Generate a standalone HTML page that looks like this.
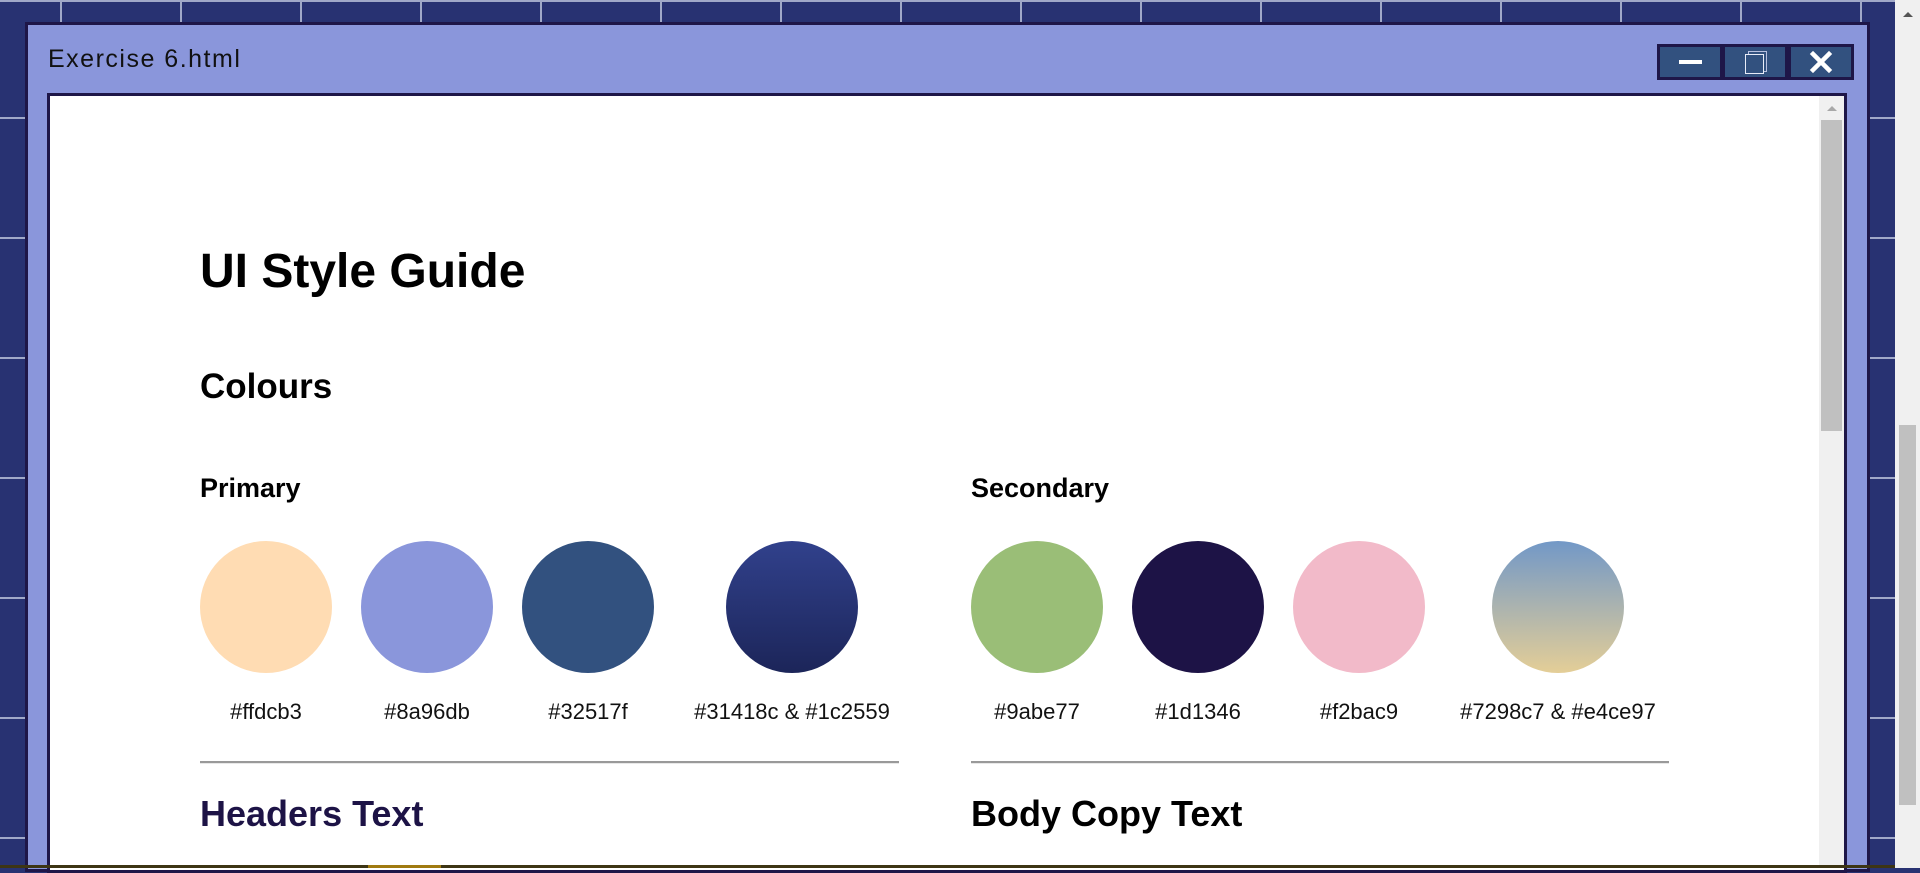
<!DOCTYPE html>
<html><head><meta charset="utf-8"><style>
*{margin:0;padding:0;box-sizing:border-box}
body{width:1920px;height:868px;overflow:hidden;position:relative;background:#283272;font-family:"Liberation Sans",sans-serif}
.vl{position:absolute;top:0;width:2px;height:868px;background:#a0a8c8}
.hl{position:absolute;left:0;height:2px;width:1895px;background:#a0a8c8}
.abs{position:absolute}
.c{position:absolute;width:132px;height:132px;border-radius:50%;top:541px}
.lb{position:absolute;top:699px;font-size:22px;color:#111;text-align:center;width:260px}
.hr{position:absolute;top:761px;height:3px;border-top:2px solid #999;border-bottom:1px solid #e8e8e8}
</style></head><body>
<div class="hl" style="top:0"></div>
<div class="vl" style="left:60px"></div><div class="vl" style="left:180px"></div><div class="vl" style="left:300px"></div><div class="vl" style="left:420px"></div><div class="vl" style="left:540px"></div><div class="vl" style="left:660px"></div><div class="vl" style="left:780px"></div><div class="vl" style="left:900px"></div><div class="vl" style="left:1020px"></div><div class="vl" style="left:1140px"></div><div class="vl" style="left:1260px"></div><div class="vl" style="left:1380px"></div><div class="vl" style="left:1500px"></div><div class="vl" style="left:1620px"></div><div class="vl" style="left:1740px"></div><div class="vl" style="left:1860px"></div>
<div class="hl" style="top:117px"></div><div class="hl" style="top:237px"></div><div class="hl" style="top:357px"></div><div class="hl" style="top:477px"></div><div class="hl" style="top:597px"></div><div class="hl" style="top:717px"></div><div class="hl" style="top:837px"></div>
<div class="abs" style="left:1895px;top:0;width:25px;height:868px;background:#f0f0f0"></div>
<div class="abs" style="left:1903px;top:12px;width:0;height:0;border-left:5px solid transparent;border-right:5px solid transparent;border-bottom:5px solid #555"></div>
<div class="abs" style="left:1899px;top:425px;width:17px;height:380px;background:#c0c0c0"></div>
<div class="abs" style="left:25px;top:22px;width:1845px;height:850px;background:#8a96db;border:3px solid #1e1648"></div>
<div class="abs" style="left:48px;top:45px;font-size:25px;color:#111;letter-spacing:1.5px">Exercise 6.html</div>
<div class="abs" style="left:1657px;top:44px;width:197px;height:36px;background:#1e1648"></div>
<div class="abs" style="left:1660px;top:47px;width:60px;height:30px;background:#32517f"></div>
<div class="abs" style="left:1725px;top:47px;width:60px;height:30px;background:#32517f"></div>
<div class="abs" style="left:1791px;top:47px;width:60px;height:30px;background:#32517f"></div>
<div class="abs" style="left:1679px;top:60px;width:23px;height:4px;background:#fff"></div>
<div class="abs" style="left:1748px;top:51px;width:19px;height:21px;border:1px solid #b8c0e0"></div>
<div class="abs" style="left:1745px;top:54px;width:19px;height:20px;border:1.5px solid #e8ecf8;background:#32517f"></div>
<svg class="abs" style="left:1808px;top:49px" width="26" height="26" viewBox="0 0 26 26"><path d="M5 5L21 21M21 5L5 21" stroke="#fff" stroke-width="4.5" stroke-linecap="square"/></svg>
<div class="abs" style="left:47px;top:93px;width:1800px;height:780px;background:#fff;border:3px solid #1e1648"></div>
<div class="abs" style="left:1819px;top:96px;width:25px;height:772px;background:#f0f0f0"></div>
<div class="abs" style="left:1827px;top:106px;width:0;height:0;border-left:5px solid transparent;border-right:5px solid transparent;border-bottom:5px solid #a8a8a8"></div>
<div class="abs" style="left:1821px;top:120px;width:21px;height:311px;background:#c0c0c0"></div>
<div class="abs" style="left:0;top:865px;width:1895px;height:3px;background:#3d3514"></div>
<div class="abs" style="left:368px;top:865px;width:73px;height:3px;background:#a07a10"></div>
<div class="abs" style="left:200px;top:244px;font-size:48px;font-weight:bold;color:#000">UI Style Guide</div>
<div class="abs" style="left:200px;top:367px;font-size:35px;font-weight:bold;color:#000">Colours</div>
<div class="abs" style="left:200px;top:473px;font-size:27px;font-weight:bold;color:#000">Primary</div>
<div class="abs" style="left:971px;top:473px;font-size:27px;font-weight:bold;color:#000">Secondary</div>
<div class="c" style="left:200px;background:#ffdcb3"></div>
<div class="c" style="left:361px;background:#8a96db"></div>
<div class="c" style="left:522px;background:#32517f"></div>
<div class="c" style="left:726px;background:linear-gradient(#31418c,#1c2559)"></div>
<div class="c" style="left:971px;background:#9abe77"></div>
<div class="c" style="left:1132px;background:#1d1346"></div>
<div class="c" style="left:1293px;background:#f2bac9"></div>
<div class="c" style="left:1492px;background:linear-gradient(#7298c7,#e4ce97)"></div>
<div class="lb" style="left:136px">#ffdcb3</div>
<div class="lb" style="left:297px">#8a96db</div>
<div class="lb" style="left:458px">#32517f</div>
<div class="lb" style="left:662px">#31418c &amp; #1c2559</div>
<div class="lb" style="left:907px">#9abe77</div>
<div class="lb" style="left:1068px">#1d1346</div>
<div class="lb" style="left:1229px">#f2bac9</div>
<div class="lb" style="left:1428px">#7298c7 &amp; #e4ce97</div>
<div class="hr" style="left:200px;width:699px"></div>
<div class="hr" style="left:971px;width:698px"></div>
<div class="abs" style="left:200px;top:793px;font-size:36px;font-weight:bold;color:#1d1346">Headers Text</div>
<div class="abs" style="left:971px;top:793px;font-size:36px;font-weight:bold;color:#000">Body Copy Text</div>
</body></html>
